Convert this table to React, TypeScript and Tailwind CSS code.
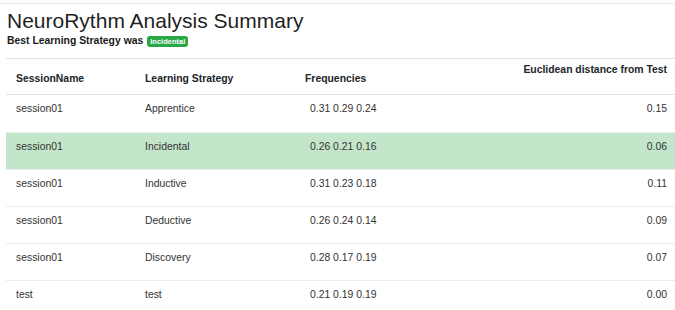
import React from "react";

type Row = {
  session: string;
  strategy: string;
  freqs: string;
  distance: string;
  best?: boolean;
};

const rows: Row[] = [
  { session: "session01", strategy: "Apprentice", freqs: "0.31 0.29 0.24", distance: "0.15" },
  { session: "session01", strategy: "Incidental", freqs: "0.26 0.21 0.16", distance: "0.06", best: true },
  { session: "session01", strategy: "Inductive", freqs: "0.31 0.23 0.18", distance: "0.11" },
  { session: "session01", strategy: "Deductive", freqs: "0.26 0.24 0.14", distance: "0.09" },
  { session: "session01", strategy: "Discovery", freqs: "0.28 0.17 0.19", distance: "0.07" },
  { session: "test", strategy: "test", freqs: "0.21 0.19 0.19", distance: "0.00" },
];

export default function App() {
  return (
    <div className="w-[675px] h-[310px] overflow-hidden bg-white text-[#212529] font-['Liberation_Sans',Arial,sans-serif]">
      <div className="mt-[3px] border-t border-[#e6e6e6]" />

      {/* Heading */}
      <div className="pl-[7px] pt-[5px]">
        <h1 className="text-[21px] leading-[24px] font-normal text-[#1f1f1f]">NeuroRythm Analysis Summary</h1>
        <div className="mt-[2px] flex items-center gap-[4px] text-[10.4px] leading-[12px] font-bold text-[#1a1a1a]">
          <span>Best Learning Strategy was</span>
          <span className="rounded-[3px] bg-[#28a745] px-[3px] text-[7.5px] leading-[11px] font-bold text-white">
            Incidental
          </span>
        </div>
      </div>

      {/* Results table */}
      <div className="ml-[6px] mt-[11px] text-[10.4px] leading-[12px]">
        <div className="flex h-[37px] border-t border-b border-[#e3e3e3] pl-[10px] pr-[8px] font-bold text-[#212529]">
          <div className="w-[129px] self-end pb-[9px]">SessionName</div>
          <div className="w-[160px] self-end pb-[9px]">Learning Strategy</div>
          <div className="flex-1 self-end pb-[9px]">Frequencies</div>
          <div className="self-start pt-[5px] text-right">Euclidean distance from Test</div>
        </div>

        {rows.map((r, i) => (
          <div
            key={i}
            className={`flex h-[37px] pl-[10px] pr-[8px] pt-[8px] text-[#333] ${
              i > 0 ? "border-t border-[#ececec]" : ""
            } ${r.best ? "bg-[#c3e6cb] border-[#c3e6cb]" : ""}`}
          >
            <div className="w-[129px]">{r.session}</div>
            <div className="w-[160px]">{r.strategy}</div>
            <div className="flex-1 pl-[5px]">{r.freqs}</div>
            <div className="text-right">{r.distance}</div>
          </div>
        ))}
      </div>
    </div>
  );
}
